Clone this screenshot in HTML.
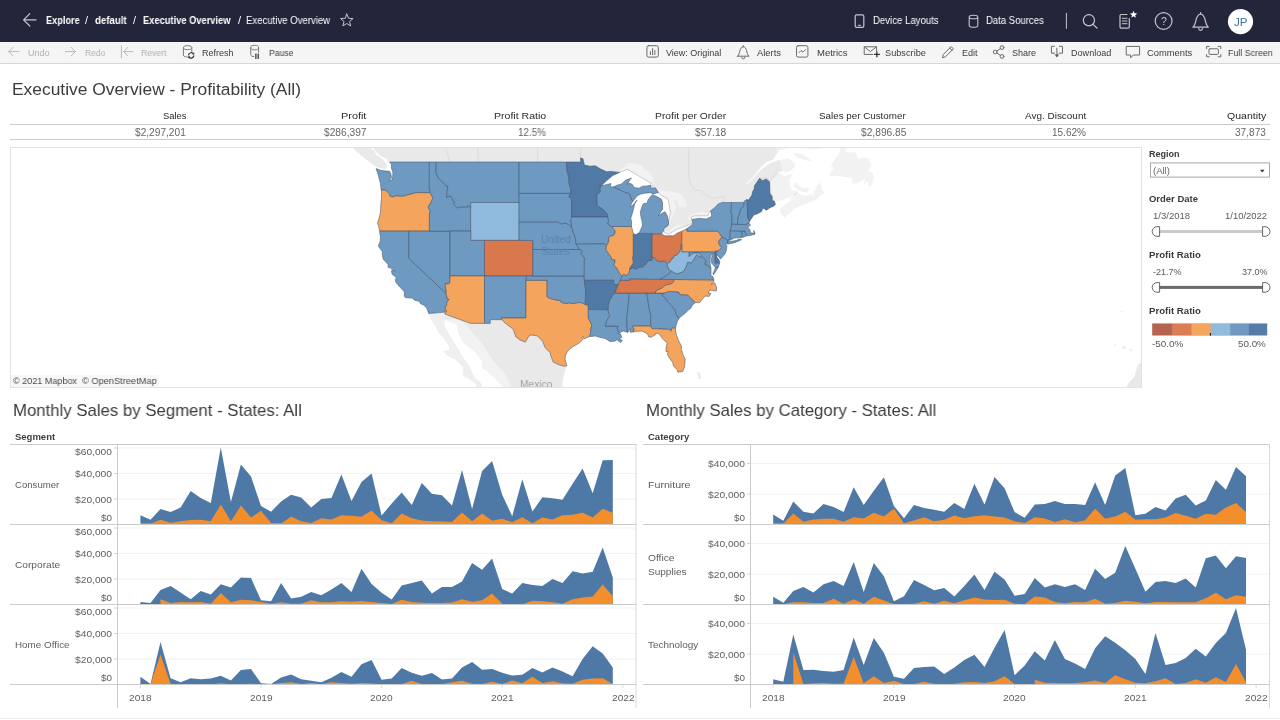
<!DOCTYPE html>
<html lang="en">
<head>
<meta charset="utf-8">
<title>Executive Overview - Profitability</title>
<style>
*{box-sizing:border-box;margin:0;padding:0}
html,body{width:1280px;height:720px;overflow:hidden;background:#fff;font-family:"Liberation Sans",sans-serif;color:#333}
.abs{position:absolute}
.x{position:absolute;white-space:nowrap;transform-origin:0 50%;will-change:transform}
#hdr{position:absolute;left:0;top:0;width:1280px;height:42px;background:#23263b}
#tb{position:absolute;left:0;top:42px;width:1280px;height:22px;background:#f5f5f5;border-bottom:1px solid #d6d6d6}
.hl{position:absolute;height:1px;background:#cbcbcb}
#map{position:absolute;left:10px;top:147px;width:1132px;height:241px;border:1px solid #e2e2e2;overflow:hidden;background:#fff}
.ml{position:absolute;white-space:nowrap;font-size:10px;line-height:12px;will-change:transform}
</style>
</head>
<body>
<div id="hdr"></div>
<div id="tb"></div>
<div class="hl" style="left:10px;top:124px;width:1260px"></div>
<div class="hl" style="left:10px;top:139px;width:1260px"></div>
<div id="map">
<svg class="abs" style="left:0;top:0" width="1130" height="239" viewBox="0 0 1130 239">
<g id="bg"><path fill="#f2f2f2" d="M608.7,24.4 616.5,21.3 640.8,35.7 642.9,40.2 643.3,39.7 642.6,35.1 641.9,30.6 639.8,25.4 632.9,21.3 630.8,17.1 626.0,16.6 617.3,14.5 615.6,18.2 610.8,20.3ZM643.3,39.7 646.0,42.2 647.1,44.2 649.5,46.7 657.1,51.1 659.5,64.2 657.6,73.8 660.6,71.4 662.3,66.6 665.4,58.4 662.6,52.1 665.4,52.1 668.2,58.4 673.7,59.4 675.8,56.5 673.7,51.6 669.5,45.7 664.0,44.7 660.6,43.7 653.6,42.7 646.7,41.7ZM652.9,82.7 653.2,84.5 657.8,86.1 665.7,81.3 674.4,78.0 681.8,75.0 677.8,75.2 673.7,78.0 671.6,77.5 666.1,77.1 661.2,80.8 657.1,83.6ZM680.8,71.4 679.9,69.5 683.4,67.8 696.5,67.8 698.9,63.3 698.6,62.3 695.8,65.2 691.7,64.2 684.8,65.2 678.5,67.8 675.8,70.9Z"/>
<path fill="#e9e9e9" d="M346.0,-13.1 352.9,-6.5 361.9,-1.0 364.6,3.3 366.7,5.5 370.9,8.7 375.7,10.8 376.4,14.0 569.6,14.0 569.6,9.9 571.9,10.6 573.4,16.9 579.0,18.2 583.1,17.8 584.8,18.0 589.3,20.8 595.6,23.7 600.1,23.4 608.7,24.4 610.8,20.3 615.6,18.2 617.3,14.5 626.0,16.6 630.8,17.1 632.9,21.3 639.8,25.4 641.9,30.6 642.6,35.1 643.3,39.7 646.7,41.7 653.6,42.7 660.6,43.7 664.0,44.7 669.5,45.7 673.7,51.6 675.8,56.5 673.7,59.4 668.2,58.4 665.4,52.1 662.6,52.1 665.4,58.4 662.3,66.6 660.6,71.4 657.6,73.8 657.1,77.5 652.9,80.4 652.9,82.7 657.1,83.6 661.2,80.8 666.1,77.1 671.6,77.5 673.7,78.0 677.8,75.2 681.8,75.0 680.8,71.4 675.8,70.9 678.5,67.8 684.8,65.2 691.7,64.2 695.8,65.2 698.6,62.3 703.4,59.9 706.9,56.2 710.7,54.5 710.7,54.5 733.1,54.4 733.8,52.6 736.1,51.6 740.8,46.7 741.8,42.7 743.2,40.7 748.8,30.0 751.1,32.8 755.3,31.0 758.7,33.9 758.9,45.2 761.2,48.6 761.2,52.6 763.9,53.9 770.8,52.1 779.5,48.6 782.9,46.7 778.4,51.3 782.6,50.6 789.8,50.9 781.5,51.3 772.9,58.0 768.8,61.8 770.1,65.9 773.9,70.0 776.0,67.1 780.2,63.9 782.9,60.9 788.1,58.4 795.4,55.5 799.5,54.1 805.7,51.3 807.8,48.6 813.0,45.7 814.0,44.7 811.3,42.7 810.2,38.2 809.5,34.3 805.7,38.2 802.3,44.7 803.0,48.2 799.5,45.9 794.0,47.7 787.4,46.0 786.4,43.4 781.2,42.4 779.1,38.2 779.5,33.9 777.4,33.6 778.8,31.6 781.5,25.4 778.1,26.5 773.6,28.0 766.3,24.4 772.6,22.8 776.0,24.4 780.2,22.3 783.6,19.2 783.6,15.5 778.1,10.8 767.7,11.9 760.8,14.5 753.9,18.7 746.6,24.9 741.4,31.6 735.6,36.2 735.2,35.6 740.8,30.6 745.2,24.9 749.7,19.2 755.3,14.0 761.5,11.9 768.4,2.2 778.1,0.1 788.5,0.1 802.3,1.2 812.7,0.1 819.6,-5.4 829.9,-13.1ZM375.0,20.3 373.3,21.3 365.3,18.7 359.8,15.0 352.9,9.7 343.9,2.2 339.7,-4.8 346.0,-6.5 356.3,-1.5 362.6,2.2 366.0,7.6 371.9,11.3 375.0,15.5 376.4,18.2ZM782.2,38.2 785.0,34.1 789.8,39.7 798.8,40.2 795.4,44.7 788.5,42.7 784.3,39.2ZM817.5,28.5 823.0,19.2 819.6,18.7 825.1,8.7 827.2,8.1 831.3,-4.3 834.8,-13.1 841.0,-13.1 835.5,-1.0 834.8,4.4 840.3,4.4 843.8,3.9 847.2,10.8 854.1,9.2 857.9,11.3 860.4,17.1 856.9,23.4 861.1,24.4 863.1,28.8 860.4,38.2 856.9,38.2 856.9,33.1 852.8,36.2 854.1,30.6 847.9,34.6 844.5,35.6 841.0,35.6 841.7,30.1 834.1,29.0 826.5,28.0ZM781.5,4.9 791.9,6.0 800.9,12.9 795.4,12.4 786.4,9.7ZM417.7,165.6 434.3,164.1 433.7,166.0 459.6,175.4 479.3,175.4 479.3,171.7 491.0,171.7 491.0,171.7 493.2,174.3 502.2,181.3 505.0,188.9 508.4,191.7 514.3,194.2 517.8,188.2 520.2,187.0 526.4,187.9 531.6,193.2 534.0,199.6 539.4,205.0 539.6,207.4 542.3,214.2 548.5,217.0 553.4,218.4 555.8,217.7 553.4,225.1 551.7,232.7 551.3,244.0 494.6,244.0 491.9,238.7 484.2,230.4 481.5,228.1 475.3,222.8 471.1,220.5 470.4,212.0 462.8,202.7 451.7,194.0 447.6,184.5 445.5,176.5 442.4,175.6 433.8,171.6 433.4,178.1 437.9,186.1 442.8,194.0 447.9,201.9 451.1,208.1 458.0,217.4 462.1,226.6 464.9,231.2 468.3,232.7 471.1,237.2 470.4,244.0 466.3,244.0 464.9,236.5 456.6,229.7 452.4,228.1 451.7,219.0 444.8,211.6 441.4,210.5 435.8,207.4 432.0,203.1 438.6,201.9 437.2,196.4 432.4,190.1 426.9,183.7 424.8,178.9 420.6,172.4ZM1114.8,240.2 1117.6,235.0 1123.8,228.1 1125.2,222.0 1127.2,216.7 1130.7,214.3 1137.6,209.7 1144.5,201.9 1144.5,240.2ZM640.5,247.7 646.7,241.0 655.0,239.8 664.0,239.1 670.9,240.2 677.8,244.0 640.5,249.2ZM686.5,223.6 688.9,225.1 690.3,231.2 687.5,230.4ZM1103.0,195.6 1104.8,196.0 1104.1,198.0ZM1110.7,199.2 1115.5,197.6 1113.4,201.5ZM1118.3,201.1 1121.0,201.1 1120.3,203.9ZM1108.6,163.0 1112.0,163.8 1110.7,164.6Z"/>
<path fill="#fff" fill-opacity="0.4" d="M760.1,-18.7 881.8,-18.7 881.8,73.8 765.0,73.8 765.0,58.4 758.0,34.6 771.2,22.3Z"/>
<path fill="#fff" fill-opacity="0.4" d="M433.8,171.6 445.5,176.5 451.7,194.0 462.8,202.7 471.1,220.5 484.2,230.4 491.9,238.7 501.5,240.2 494.6,226.6 482.2,212.8 472.5,197.2 462.8,186.1 455.9,178.1 446.2,170.8Z"/>
<path fill="#fff" fill-opacity="0.3" d="M417.7,165.6 434.3,164.1 433.8,171.6 433.4,178.1 437.9,186.1 442.8,194.0 447.9,201.9 451.1,208.1 458.0,217.4 462.1,226.6 464.9,231.2 468.3,232.7 471.1,237.2 470.4,244.0 466.3,244.0 464.9,236.5 456.6,229.7 452.4,228.1 451.7,219.0 444.8,211.6 441.4,210.5 435.8,207.4 432.0,203.1 438.6,201.9 437.2,196.4 432.4,190.1 426.9,183.7 424.8,178.9 420.6,172.4Z"/>
<path fill="none" stroke="#b5b5b5" stroke-width="0.7" d="M608.7,24.4 616.5,21.3 640.8,35.7 642.9,40.2 646.0,42.2 647.1,44.2 649.5,46.7 657.1,51.1 659.5,64.2 657.6,73.8 657.1,77.5 652.9,80.4 652.9,82.7 653.2,84.5 657.8,86.1 665.7,81.3 674.4,78.0 681.8,75.0 680.8,71.4 679.9,69.5 683.4,67.8 696.5,67.8 698.9,63.3"/>
<path fill="none" stroke="#d2d2d2" stroke-width="0.6" d="M677.7,-13.1 677.7,29.0 679.9,36.2 683.4,41.7 690.3,42.7 693.7,46.2 697.9,49.1 700.7,49.9 704.1,50.4 709.0,48.6 713.1,48.9 712.8,51.6 712.4,54.1"/>
<path fill="none" stroke="#d2d2d2" stroke-width="0.6" d="M397.8,-13.1 434.5,-1.0 438.8,14.0"/>
<path fill="none" stroke="#d2d2d2" stroke-width="0.6" d="M467.0,-13.1 467.0,14.0"/>
<path fill="none" stroke="#d2d2d2" stroke-width="0.6" d="M526.4,-13.1 526.7,14.0"/>
<path fill="none" stroke="#d2d2d2" stroke-width="0.6" d="M569.6,-13.1 569.6,9.9"/>
<path fill="none" stroke="#d2d2d2" stroke-width="0.6" d="M758.7,33.9 754.6,29.0 750.1,31.6"/>
<path fill="none" stroke="#d2d2d2" stroke-width="0.6" d="M758.7,33.9 765.0,25.4 766.3,24.4"/>
<path fill="none" stroke="#d2d2d2" stroke-width="0.6" d="M782.9,46.7 786.4,44.7"/></g>
<g id="st" stroke="#40506a" stroke-opacity="0.7" stroke-width="0.75" stroke-linejoin="round">
<path d="M404.9,44.7 402.7,45.4 398.5,46.4 394.4,47.7 389.5,48.5 385.4,47.7 381.9,49.1 378.7,48.2 378.5,46.0 375.7,43.2 373.6,42.1 370.2,41.9 369.7,38.2 369.5,35.6 368.4,31.6 367.1,26.5 365.1,20.5 369.5,22.3 375.0,23.1 378.5,23.2 379.7,25.4 380.5,29.5 378.1,33.1 380.9,32.1 381.7,28.5 381.9,24.4 380.5,20.3 380.5,16.6 378.6,14.0 418.4,14.0 418.3,40.4 419.1,43.0 419.1,44.7Z" fill="#6e9ac2"/>
<path d="M370.2,41.9 373.6,42.1 375.7,43.2 378.5,46.0 378.7,48.2 381.9,49.1 385.4,47.7 389.5,48.5 394.4,47.7 398.5,46.4 402.7,45.4 404.9,44.7 419.1,44.7 420.1,46.7 422.0,50.1 419.6,55.0 418.2,57.0 417.2,59.9 419.3,62.8 418.4,65.9 418.4,83.1 368.7,83.1 367.4,77.5 366.4,75.3 368.1,70.0 369.5,64.2 369.8,56.5 370.5,49.6 370.5,42.7Z" fill="#f4a45c"/>
<path d="M368.7,83.1 397.8,83.1 397.8,110.4 434.9,145.1 435.4,146.8 436.5,151.0 438.3,151.2 435.8,154.3 435.7,157.6 434.3,158.5 434.5,161.8 435.8,163.2 434.3,164.1 417.7,165.6 416.8,163.0 415.8,160.1 412.3,156.8 409.6,155.8 408.2,153.2 403.4,152.2 401.3,150.1 394.6,149.7 393.3,148.4 393.3,143.8 391.6,141.7 388.8,139.1 384.7,134.0 384.3,131.4 385.4,129.7 384.0,128.4 381.2,126.3 380.5,123.6 381.2,121.0 383.3,123.6 382.6,120.1 380.5,120.6 377.1,119.3 377.1,116.6 372.2,111.3 371.5,107.8 371.2,103.3 367.7,98.8 367.4,97.4 369.1,93.8 369.5,88.7 368.8,85.5Z" fill="#6e9ac2"/>
<path d="M397.8,83.1 439.0,83.1 439.0,134.9 437.2,136.2 434.1,135.7 434.5,138.3 434.8,140.8 435.4,143.8 434.9,145.1 397.8,110.4Z" fill="#6e9ac2"/>
<path d="M418.4,14.0 425.1,14.0 425.1,24.6 427.4,30.3 432.4,34.6 435.2,38.2 436.9,38.2 436.2,43.2 435.5,49.1 439.6,47.8 440.7,49.6 443.1,54.1 443.1,56.5 446.2,59.9 451.1,58.8 456.6,58.9 456.8,57.4 459.7,59.7 459.7,83.1 418.4,83.1 418.4,65.9 419.3,62.8 417.2,59.9 418.2,57.0 419.6,55.0 422.0,50.1 420.1,46.7 419.1,44.7 419.1,43.0 418.3,40.4Z" fill="#6e9ac2"/>
<path d="M425.1,14.0 425.1,24.6 427.4,30.3 432.4,34.6 435.2,38.2 436.9,38.2 436.2,43.2 435.5,49.1 439.6,47.8 440.7,49.6 443.1,54.1 443.1,56.5 446.2,59.9 451.1,58.8 456.6,58.9 456.8,57.4 459.7,59.7 459.7,54.5 508.1,54.5 508.1,14.0Z" fill="#6e9ac2"/>
<path d="M459.7,54.5 508.1,54.5 508.1,92.4 459.7,92.4Z" fill="#90badd"/>
<path d="M439.0,83.1 459.7,83.1 459.7,92.4 473.5,92.4 473.5,128.0 439.0,128.0Z" fill="#6e9ac2"/>
<path d="M473.5,92.4 521.9,92.4 521.9,128.0 473.5,128.0Z" fill="#d9784c"/>
<path d="M439.0,128.0 473.5,128.0 473.5,175.4 459.6,175.4 433.7,166.0 434.3,164.1 435.8,163.2 434.5,161.8 434.3,158.5 435.7,157.6 435.8,154.3 438.3,151.2 436.5,151.0 435.4,146.8 434.9,145.1 435.4,143.8 434.8,140.8 434.5,138.3 434.1,135.7 437.2,136.2 439.0,134.9Z" fill="#f4a45c"/>
<path d="M473.5,128.0 515.4,128.0 515.1,132.3 514.9,170.0 490.3,170.0 491.0,171.7 479.3,171.7 479.3,175.4 473.5,175.4Z" fill="#6e9ac2"/>
<path d="M490.3,170.0 514.9,170.0 515.1,132.3 536.1,132.3 536.1,148.8 538.9,150.3 541.6,151.0 545.8,152.2 549.2,152.4 550.3,154.5 555.5,155.6 558.2,154.7 561.7,155.6 567.2,154.5 570.7,154.7 574.3,156.5 577.3,157.2 577.3,161.6 577.3,170.0 579.0,173.2 580.9,177.3 579.7,181.3 579.5,185.3 578.7,188.5 572.7,190.9 572.4,188.5 570.7,189.3 571.7,191.7 568.6,194.8 561.7,198.8 556.8,202.7 554.4,207.4 554.1,211.2 555.8,217.7 553.4,218.4 548.5,217.0 542.3,214.2 539.6,207.4 539.4,205.0 534.0,199.6 531.6,193.2 526.4,187.9 520.2,187.0 517.8,188.2 514.3,194.2 508.4,191.7 505.0,188.9 502.2,181.3 493.2,174.3 491.0,171.7Z" fill="#f4a45c"/>
<path d="M515.4,128.0 573.3,128.0 573.3,132.3 574.6,141.7 574.3,156.5 570.7,154.7 567.2,154.5 561.7,155.6 558.2,154.7 555.5,155.6 550.3,154.5 549.2,152.4 545.8,152.2 541.6,151.0 538.9,150.3 536.1,148.8 536.1,132.3 515.1,132.3Z" fill="#6e9ac2"/>
<path d="M521.9,101.5 568.5,101.5 570.7,102.4 571.4,103.7 570.0,105.5 573.4,109.5 573.3,128.0 521.9,128.0Z" fill="#6e9ac2"/>
<path d="M508.1,73.8 546.5,73.8 549.9,75.9 554.8,75.1 558.9,77.5 560.6,78.6 561.7,83.1 563.1,85.9 564.4,90.5 564.8,95.1 565.3,96.2 568.5,101.5 521.9,101.5 521.9,92.4 508.1,92.4Z" fill="#6e9ac2"/>
<path d="M508.1,45.3 559.9,45.3 557.9,48.6 560.6,51.6 560.6,69.0 560.0,72.8 560.6,78.6 558.9,77.5 554.8,75.1 549.9,75.9 546.5,73.8 508.1,73.8Z" fill="#6e9ac2"/>
<path d="M508.1,14.0 555.3,14.0 556.2,23.4 557.9,29.5 558.2,35.6 559.9,41.7 559.9,45.3 508.1,45.3Z" fill="#6e9ac2"/>
<path d="M559.9,45.3 559.9,41.7 558.2,35.6 557.9,29.5 556.2,23.4 555.3,14.0 569.6,14.0 569.6,9.9 571.9,10.6 573.4,16.9 579.0,18.2 583.1,17.8 584.8,18.0 589.3,20.8 595.6,23.7 600.1,23.4 608.7,24.4 601.8,27.5 596.3,32.1 591.4,36.7 591.3,37.7 589.4,38.1 589.4,43.9 585.9,46.7 586.2,51.6 586.2,57.0 589.3,59.4 592.1,61.3 596.3,65.7 596.8,69.0 560.6,69.0 560.6,51.6 557.9,48.6Z" fill="#5079a5"/>
<path d="M560.6,69.0 596.8,69.0 597.6,72.8 596.9,76.1 600.7,78.5 603.9,82.2 604.2,85.0 602.8,87.3 598.0,88.7 597.6,94.2 595.4,98.0 593.3,95.9 565.3,96.2 564.8,95.1 564.4,90.5 563.1,85.9 561.7,83.1 560.6,78.6 560.0,72.8Z" fill="#6e9ac2"/>
<path d="M565.3,96.2 593.3,95.9 595.4,98.0 594.9,101.5 597.6,105.5 600.4,109.5 600.7,111.3 603.9,111.8 604.0,114.0 602.8,117.5 605.9,120.1 608.7,125.4 611.1,128.2 609.4,132.3 608.4,134.4 607.3,136.6 602.7,136.6 602.7,132.3 573.3,132.3 573.4,109.5 570.0,105.5 571.4,103.7 570.7,102.4 568.5,101.5Z" fill="#6e9ac2"/>
<path d="M573.3,132.3 602.7,132.3 602.7,136.6 607.3,136.6 605.6,140.8 604.5,144.2 603.2,145.1 601.1,148.4 598.7,152.6 597.6,156.8 597.2,161.8 577.3,161.6 577.3,157.2 574.3,156.5 574.6,141.7Z" fill="#5079a5"/>
<path d="M577.3,161.6 597.2,161.8 597.6,165.9 599.0,167.5 595.9,172.4 594.2,178.1 607.1,178.1 606.3,180.5 607.7,183.7 608.7,184.7 606.6,185.7 609.4,185.7 610.8,189.3 608.0,190.1 611.5,192.8 609.4,194.6 605.9,191.7 603.9,193.2 599.0,193.6 596.3,191.7 592.8,190.1 590.0,189.7 584.5,188.1 578.7,188.5 579.5,185.3 579.7,181.3 580.9,177.3 579.0,173.2 577.3,170.0Z" fill="#6e9ac2"/>
<path d="M597.2,161.8 597.6,156.8 598.7,152.6 601.1,148.4 603.2,145.1 617.7,145.1 618.4,145.9 615.8,170.8 616.3,184.3 612.2,183.1 608.7,184.7 607.7,183.7 606.3,180.5 607.1,178.1 594.2,178.1 595.9,172.4 599.0,167.5 597.6,165.9Z" fill="#6e9ac2"/>
<path d="M617.7,145.1 635.7,145.1 638.6,162.8 639.8,167.5 639.5,173.6 639.8,178.1 621.8,178.1 621.8,179.3 623.2,180.9 622.4,183.9 620.5,184.3 619.1,184.1 619.6,180.9 618.7,180.9 618.0,183.3 616.3,184.3 615.8,170.8 618.4,145.9Z" fill="#6e9ac2"/>
<path d="M635.7,145.1 638.6,162.8 639.8,167.5 639.5,173.6 639.8,178.1 640.8,180.5 659.2,181.5 660.2,183.2 660.6,180.1 664.4,180.3 665.4,176.5 666.4,173.2 668.5,169.7 666.8,169.1 664.7,165.1 664.0,161.8 660.6,157.6 656.7,153.9 654.3,149.7 651.2,147.6 652.9,145.1Z" fill="#6e9ac2"/>
<path d="M622.4,183.9 623.2,180.9 621.8,179.3 621.8,178.1 639.8,178.1 640.8,180.5 659.2,181.5 660.2,183.2 660.6,180.1 664.4,180.3 664.7,183.7 665.7,187.7 668.2,194.0 670.6,198.0 670.2,201.1 672.3,207.4 674.2,211.2 673.7,217.4 673.0,220.5 671.6,223.6 668.2,223.9 666.8,224.2 666.4,222.0 662.6,218.2 661.6,214.3 659.2,211.2 656.4,206.6 657.1,203.5 655.0,203.5 655.0,200.3 656.1,194.8 653.6,192.8 650.9,190.1 648.8,186.5 646.7,185.3 644.3,185.7 644.3,186.9 639.8,189.3 637.4,188.6 637.0,186.9 635.0,184.9 630.8,183.1 626.0,183.3Z" fill="#f4a45c"/>
<path d="M652.9,145.1 657.8,143.4 667.2,143.8 667.2,144.7 667.9,144.2 669.0,146.6 676.7,146.8 684.4,154.6 681.3,157.2 679.9,160.1 677.1,162.2 674.4,165.1 671.3,167.5 668.5,169.7 666.8,169.1 664.7,165.1 664.0,161.8 660.6,157.6 656.7,153.9 654.3,149.7 651.2,147.6Z" fill="#6e9ac2"/>
<path d="M644.5,145.1 652.9,145.1 657.8,143.4 667.2,143.8 667.2,144.7 667.9,144.2 669.0,146.6 676.7,146.8 684.4,154.6 688.6,154.7 691.0,151.4 694.4,148.0 698.2,148.4 700.0,145.5 697.2,145.1 698.6,142.1 705.3,143.1 705.7,140.0 703.8,134.9 700.0,136.6 702.7,134.0 702.9,131.9 662.8,131.5 662.6,133.6 660.6,135.6 656.4,136.6 654.3,137.0 651.9,139.1 650.2,140.3 646.7,141.7 644.6,143.4Z" fill="#f4a45c"/>
<path d="M603.2,145.1 604.5,144.2 605.6,140.8 607.3,136.6 608.4,134.4 609.4,132.3 618.7,132.3 618.7,130.7 648.9,131.4 662.8,131.5 662.6,133.6 660.6,135.6 656.4,136.6 654.3,137.0 651.9,139.1 650.2,140.3 646.7,141.7 644.6,143.4 644.5,145.1Z" fill="#d9784c"/>
<path d="M609.4,132.3 611.1,128.2 612.5,126.3 616.0,127.4 618.4,123.6 618.7,121.0 621.8,119.7 625.3,121.0 627.4,119.4 629.4,118.8 631.2,119.3 634.3,116.8 637.0,112.8 640.8,112.2 641.1,109.5 643.3,109.5 645.3,112.2 649.1,113.7 653.6,112.8 656.4,115.6 656.4,117.8 658.5,122.1 660.8,123.3 655.7,127.6 648.9,131.4 618.7,130.7 618.7,132.3Z" fill="#6e9ac2"/>
<path d="M595.4,98.0 597.6,94.2 598.0,88.7 602.8,87.3 604.2,85.0 603.9,82.2 600.7,78.5 620.5,78.5 621.5,82.2 622.4,85.9 622.3,107.3 621.8,110.4 622.5,114.9 619.4,119.3 618.7,121.0 618.4,123.6 616.0,127.4 612.5,126.3 611.1,128.2 608.7,125.4 605.9,120.1 602.8,117.5 604.0,114.0 603.9,111.8 600.7,111.3 600.4,109.5 597.6,105.5 594.9,101.5Z" fill="#f4a45c"/>
<path d="M622.4,85.9 622.3,107.3 621.8,110.4 622.5,114.9 619.4,119.3 618.7,121.0 621.8,119.7 625.3,121.0 627.4,119.4 629.4,118.8 631.2,119.3 634.3,116.8 637.0,112.8 640.8,112.2 641.1,109.5 641.2,85.9 641.2,85.4 627.2,85.4 624.6,86.4Z" fill="#5079a5"/>
<path d="M641.2,85.9 650.5,85.7 653.6,87.8 655.7,87.8 660.6,87.8 662.6,87.8 666.1,85.2 670.8,83.3 670.8,95.7 669.9,96.5 670.2,99.7 668.5,104.2 666.1,106.9 663.0,108.0 662.3,110.4 660.6,110.9 659.2,114.0 656.4,115.6 653.6,112.8 649.1,113.7 645.3,112.2 643.3,109.5 641.1,109.5Z" fill="#d9784c"/>
<path d="M627.2,85.4 641.2,85.4 641.2,85.9 650.5,85.7 652.3,83.1 652.9,80.4 657.1,77.5 657.6,73.8 656.4,68.1 654.0,63.8 651.2,65.2 647.4,67.6 649.8,63.8 651.6,61.3 651.6,54.5 650.2,51.1 645.3,48.3 641.5,46.9 639.8,48.2 637.0,52.1 635.7,55.5 632.6,55.5 631.2,58.0 629.4,63.8 629.8,68.1 631.2,73.8 631.5,77.5 628.7,84.1ZM602.3,39.0 611.5,43.4 614.9,44.7 618.4,45.7 620.1,50.6 621.8,53.6 625.3,49.1 626.3,47.7 629.1,46.2 633.6,45.2 639.8,44.7 641.9,46.2 645.3,44.9 647.4,44.7 646.0,42.2 644.3,39.7 642.6,40.2 639.8,39.7 639.8,37.0 636.4,37.9 631.5,38.2 628.1,40.2 623.2,39.5 621.1,36.2 617.7,35.1 616.0,36.7 619.1,31.6 620.5,30.1 614.9,32.1 610.1,36.2 605.9,37.2Z" fill="#6e9ac2"/>
<path d="M591.3,37.7 589.4,38.1 589.4,43.9 585.9,46.7 586.2,51.6 586.2,57.0 589.3,59.4 592.1,61.3 596.3,65.7 596.8,69.0 597.6,72.8 596.9,76.1 600.7,78.5 620.5,78.5 620.5,73.8 619.8,70.0 621.1,66.2 622.5,61.3 623.6,56.0 626.0,52.1 623.2,55.5 620.8,58.0 619.1,58.9 620.8,55.0 621.8,53.6 620.1,50.6 618.4,45.7 614.9,44.7 611.5,43.4 602.3,39.0 599.0,38.7 600.1,35.6 596.9,36.2Z" fill="#6e9ac2"/>
<path d="M670.8,83.3 676.0,80.6 676.0,83.1 706.5,83.1 708.6,85.5 711.0,89.1 708.1,92.6 707.6,95.6 710.7,99.7 707.9,102.6 706.0,103.3 704.8,102.9 703.5,104.0 670.8,104.0Z" fill="#f4a45c"/>
<path d="M676.0,83.1 676.0,80.6 681.3,76.6 682.0,74.7 680.9,71.4 688.2,70.3 695.1,71.1 699.3,69.0 700.7,68.5 700.3,64.7 698.9,63.3 703.4,59.9 706.9,56.2 710.7,54.5 720.4,54.5 720.4,58.4 720.0,64.2 721.0,68.1 720.9,76.1 719.3,82.7 719.0,89.6 719.5,90.5 717.7,91.5 718.3,92.4 716.6,94.2 715.9,95.1 716.6,92.4 711.0,89.1 708.6,85.5 706.5,83.1ZM715.6,96.0 717.6,96.0 723.5,94.7 730.7,91.7 728.0,91.0 725.2,92.6 721.4,93.1 717.6,93.8Z" fill="#6e9ac2"/>
<path d="M711.0,89.1 716.6,92.4 715.9,95.1 714.1,96.9 715.9,97.4 715.5,101.5 714.5,105.1 712.8,107.3 709.6,111.1 707.9,108.7 705.1,106.4 705.1,104.6 706.0,103.3 707.9,102.6 710.7,99.7 707.6,95.6 708.1,92.6Z" fill="#6e9ac2"/>
<path d="M703.5,104.0 704.8,102.9 706.0,103.3 705.1,104.6 705.1,106.4 706.2,109.5 708.3,112.2 708.6,115.3 704.1,115.2Z" fill="#5079a5"/>
<path d="M678.0,104.0 703.5,104.0 704.1,115.2 708.6,115.3 707.3,119.0 704.5,119.7 702.7,117.5 700.7,115.3 700.3,110.9 701.3,107.3 701.3,105.5 699.4,108.2 699.1,111.3 699.1,115.7 699.6,118.8 700.0,120.1 695.8,117.1 693.4,116.2 694.8,113.5 694.8,112.2 691.7,109.5 690.1,107.6 688.2,105.1 685.4,104.9 683.0,105.1 680.9,106.1 678.0,108.7Z" fill="#6e9ac2"/>
<path d="M648.9,131.4 655.7,127.6 660.8,123.3 665.9,125.9 672.3,123.6 674.7,119.3 676.8,114.0 679.9,115.0 682.2,112.2 685.8,106.4 689.4,109.3 690.1,107.6 691.7,109.5 694.8,112.2 694.8,113.5 693.4,116.2 695.8,117.1 700.0,120.1 700.0,123.2 700.0,128.0 702.0,128.6 702.9,131.9 662.8,131.5ZM704.5,119.7 707.3,119.0 704.8,123.2 702.4,126.9 702.0,125.4Z" fill="#6e9ac2"/>
<path d="M656.4,115.6 659.2,114.0 660.6,110.9 662.3,110.4 663.0,108.0 666.1,106.9 668.5,104.2 670.2,99.7 669.9,96.5 670.8,95.7 670.8,104.0 678.0,104.0 678.0,108.7 680.9,106.1 683.0,105.1 685.4,104.9 688.2,105.1 690.1,107.6 689.4,109.3 685.8,106.4 682.2,112.2 679.9,115.0 676.8,114.0 674.7,119.3 672.3,123.6 665.9,125.9 660.8,123.3 658.5,122.1 656.4,117.8Z" fill="#90badd"/>
<path d="M719.3,82.7 731.1,83.0 731.1,88.5 730.7,89.4 723.5,90.1 718.3,92.4 717.7,91.5 719.5,90.5 719.0,89.6Z" fill="#6e9ac2"/>
<path d="M731.1,83.0 734.0,83.0 734.0,84.1 735.2,86.1 735.8,87.8 733.1,89.0 730.7,89.4 731.1,88.5Z" fill="#6e9ac2"/>
<path d="M720.9,76.1 726.5,76.3 734.5,76.6 735.2,76.1 737.9,75.0 739.4,77.1 736.6,79.9 738.7,81.3 739.7,85.0 743.5,85.0 742.8,82.7 742.1,82.5 743.9,84.1 743.9,86.2 739.0,87.6 735.8,87.8 735.2,86.1 734.0,84.1 734.0,83.0 731.1,83.0 719.3,82.7Z" fill="#6e9ac2"/>
<path d="M720.4,54.5 733.1,54.4 732.8,58.4 729.3,61.3 729.3,63.3 728.3,66.6 726.9,70.0 726.6,73.8 726.5,76.3 720.9,76.1 721.0,68.1 720.0,64.2 720.4,58.4Z" fill="#6e9ac2"/>
<path d="M733.1,54.4 733.8,52.6 736.1,51.6 736.7,70.0 737.9,72.5 738.7,73.1 737.9,75.0 735.2,76.1 734.5,76.6 726.5,76.3 726.6,73.8 726.9,70.0 728.3,66.6 729.3,63.3 729.3,61.3 732.8,58.4Z" fill="#6e9ac2"/>
<path d="M736.1,51.6 737.6,52.1 738.7,50.1 740.8,47.2 741.8,43.2 743.2,40.7 743.5,37.7 748.8,30.0 750.1,31.6 751.1,32.8 755.3,31.0 758.7,33.9 758.9,45.2 761.2,48.6 761.2,52.6 763.2,53.1 764.5,56.5 762.2,58.4 759.4,59.4 757.3,60.9 755.3,62.3 753.5,60.9 751.8,59.9 750.8,63.3 748.4,64.7 745.6,66.2 743.5,66.6 742.1,68.1 740.8,70.0 739.4,71.9 738.7,73.1 737.9,72.5 736.7,70.0Z" fill="#5079a5"/>
</g>
</svg>
<div class="ml" style="left:508.5px;top:229.7px;font-size:10.9px;line-height:13px;color:#a3a3a3;transform-origin:0 50%;transform:scaleX(.94)">Mexico</div>
<div class="abs" style="left:0;top:227px;width:148px;height:12px;background:rgba(246,246,246,.85)"></div>
</div>
<svg class="abs" style="left:0;top:0" width="1280" height="400" viewBox="0 0 1280 400">
<g fill="none" stroke="#c4c5cf" stroke-width="1.2" stroke-linecap="round" stroke-linejoin="round">
<path d="M36,19.8 H23.6 M29.8,13.6 L23.6,19.8 L29.8,26"/>
<path d="M346.80,14.00 L348.50,18.25 L353.08,18.56 L349.56,21.50 L350.68,25.94 L346.80,23.50 L342.92,25.94 L344.04,21.50 L340.52,18.56 L345.10,18.25Z" stroke-width="1"/>
<rect x="855.2" y="14.8" width="8.6" height="12.6" rx="1.4"/><path d="M858.3,25.3 H860.7" stroke-width="1"/>
<path d="M969.2,17.0 A4.3,1.8 0 1 0 977.8,17.0 A4.3,1.8 0 1 0 969.2,17.0 V25.4 A4.3,1.8 0 0 0 977.8,25.4 V17.0" stroke-width="1.1"/>
<path d="M1066.4,13.4 V28.4" stroke-width="1"/>
<circle cx="1088.9" cy="20.3" r="5.6"/><path d="M1093,24.4 L1097,28"/>
<path d="M1129.3,18.5 V26.8 a1.4,1.4 0 0 1 -1.4,1.4 H1121.4 a1.4,1.4 0 0 1 -1.4,-1.4 V15.9 a1.4,1.4 0 0 1 1.4,-1.4 H1127" /><path d="M1122.3,18.3 H1127 M1122.3,21 H1127 M1122.3,23.7 H1127" stroke-width="1"/>
<circle cx="1163.6" cy="21" r="8.4"/>
<path d="M1192.8,27.2 C1197.1,24.0 1194.8,14.5 1200.6,14.0 C1206.4,14.5 1204.1,24.0 1208.4,27.2 L1192.8,27.2 Z"/><path d="M1198.8,28.6 a1.8,1.8 0 0 0 3.6,0"/><path d="M1200.6,12.6 V13.8"/>
</g>
<path d="M1133.60,10.70 L1134.60,13.22 L1137.31,13.39 L1135.22,15.13 L1135.89,17.76 L1133.60,16.30 L1131.31,17.76 L1131.98,15.13 L1129.89,13.39 L1132.60,13.22Z" fill="#fff"/>
<circle cx="1240.5" cy="21.6" r="12.6" fill="#fff"/>
<g fill="none" stroke-width="1" stroke-linecap="round" stroke-linejoin="round">
<g stroke="#b9b9b9">
<path d="M18.8,51.6 H8.8 M12.8,47.4 L8.8,51.6 L12.8,55.8"/>
<path d="M65.3,51.6 H75.3 M71.3,47.4 L75.3,51.6 L71.3,55.8"/>
<path d="M121.4,45.6 V57.8 M132.8,51.6 H123.8 M127.6,47.4 L123.8,51.6 L127.6,55.8"/>
</g><g stroke="#6a6a6a">
<path d="M183.4,47.6 A4.2,2.0 0 1 0 191.8,47.6 A4.2,2.0 0 1 0 183.4,47.6 V55.0 A4.2,2.0 0 0 0 191.8,55.0 V47.6" stroke="#7a7a7a"/>
<circle cx="191.2" cy="55.4" r="3.7" fill="#f5f5f5" stroke="none"/><g stroke="#333" stroke-width="1.25"><path d="M188.6,54.9 a2.7,2.7 0 0 1 4.9,-1 M193.8,55.9 a2.7,2.7 0 0 1 -4.9,1"/></g><path d="M194.2,52.3 V54.3 H192.2 Z M188.2,58.5 V56.5 H190.2 Z" fill="#333" stroke="none"/>
<path d="M250.7,47.6 A4.0,2.0 0 1 0 258.6,47.6 A4.0,2.0 0 1 0 250.7,47.6 V55.0 A4.0,2.0 0 0 0 258.6,55.0 V47.6" stroke="#7a7a7a"/>
<rect x="254.2" y="52.6" width="6" height="7" fill="#f5f5f5" stroke="none"/><path d="M255.85,53.6 V58.9 M258.25,53.6 V58.9" stroke="#555" stroke-width="1.5" stroke-linecap="butt"/>
<rect x="646.9" y="45.7" width="11.4" height="11.4" rx="1.6"/><path d="M650.4,54.6 V51.6 M652.6,54.6 V48.6 M654.8,54.6 V50.4"/>
<path d="M737.5,56.2 C740.7,54.0 738.9,47.2 743.3,46.8 C747.6,47.2 745.9,54.0 749.1,56.2 L737.5,56.2 Z"/><path d="M741.8,57.4 a1.5,1.5 0 0 0 3,0"/><path d="M743.3,45.6 V46.6"/>
<rect x="796.5" y="45.7" width="11.4" height="11.4" rx="1.6"/><path d="M799,52.6 L801,50.6 L803,52.2 L805.6,49.6"/>
<path d="M876.6,51.4 V46.8 H864.2 V54.4 H872.6 M864.2,46.8 L870.4,51.6 L876.6,46.8"/><path d="M876.9,52 V56.8 M874.4,54.4 H879.4" stroke="#333" stroke-width="1.3"/>
<path d="M942.6,57.4 L943.4,54.4 L951.2,46.6 L953.4,48.8 L945.6,56.6 Z M949.8,48 L952,50.2"/>
<circle cx="1002" cy="47.6" r="1.9"/><circle cx="995.2" cy="52" r="1.9"/><circle cx="1002" cy="56.4" r="1.9"/><path d="M996.9,51 L1000.3,48.7 M996.9,53 L1000.3,55.3"/>
<path d="M1054.4,46.3 H1051.4 V53.2 H1054.6 M1059.4,46.3 H1062.5 V53.2 H1059.2 M1056.9,48.2 V55.5"/><path d="M1054.7,54.6 H1059.1 L1056.9,57.4 Z" fill="#555" stroke="none"/>
<path d="M1126.6,46.4 H1139.6 V55 H1133.4 L1130.6,57.8 V55 H1126.6 Z"/>
<path d="M1206.6,48.6 V46.4 H1209.2 M1218.2,46.4 H1220.8 V48.6 M1220.8,54.6 V56.8 H1218.2 M1209.2,56.8 H1206.6 V54.6"/><rect x="1209" y="48.8" width="9.4" height="5.6" rx="0.8"/>
</g></g>
<rect x="1150.5" y="162.9" width="119" height="14.2" fill="#fff" stroke="#a8a8a8" stroke-width="1"/>
<path d="M1260.1,169.8 H1264.5 L1262.3,172.6 Z" fill="#333"/>
<rect x="1159" y="230.0" width="104" height="3" fill="#cacaca"/>
<path d="M1159.6,226.7 V236.3 H1157 a4.6,4.6 0 0 1 0,-9.6 Z" fill="#fff" stroke="#555" stroke-width="0.9"/>
<path d="M1262.6,226.7 V236.3 H1265.2 a4.6,4.6 0 0 0 0,-9.6 Z" fill="#fff" stroke="#555" stroke-width="0.9"/>
<rect x="1159" y="285.9" width="104" height="3" fill="#6a6a6a"/>
<path d="M1159.6,282.6 V292.2 H1157 a4.6,4.6 0 0 1 0,-9.6 Z" fill="#fff" stroke="#555" stroke-width="0.9"/>
<path d="M1262.6,282.6 V292.2 H1265.2 a4.6,4.6 0 0 0 0,-9.6 Z" fill="#fff" stroke="#555" stroke-width="0.9"/>
<rect x="1152.2" y="323.4" width="20.6" height="12.1" fill="#b5634f"/>
<rect x="1172.5" y="323.4" width="19.4" height="12.1" fill="#dd7c50"/>
<rect x="1191.6" y="323.4" width="19.4" height="12.1" fill="#f4a55e"/>
<rect x="1210.7" y="323.4" width="19.7" height="12.1" fill="#91bbdd"/>
<rect x="1230.1" y="323.4" width="19.1" height="12.1" fill="#7099c2"/>
<rect x="1248.9" y="323.4" width="18.3" height="12.1" fill="#557ba6"/>
<path d="M1152.2,323.4 H1266.9 M1152.2,335.5 H1266.9" stroke="#c9b8a5" stroke-width="0.6"/>
<rect x="1209.9" y="333" width="1" height="2.6" fill="#111"/>
</svg>
<div class="hl" style="left:0;top:718px;width:1280px;background:#ececec"></div>
<svg class="abs" style="left:0;top:0" width="1280" height="720" viewBox="0 0 1280 720"><line x1="118" x2="636" y1="499.0" y2="499.0" stroke="#f2f2f2" stroke-width="1"/>
<line x1="114" x2="117" y1="499.0" y2="499.0" stroke="#d0d0d0" stroke-width="1"/>
<line x1="118" x2="636" y1="473.5" y2="473.5" stroke="#f2f2f2" stroke-width="1"/>
<line x1="114" x2="117" y1="473.5" y2="473.5" stroke="#d0d0d0" stroke-width="1"/>
<line x1="118" x2="636" y1="448.0" y2="448.0" stroke="#f2f2f2" stroke-width="1"/>
<line x1="114" x2="117" y1="448.0" y2="448.0" stroke="#d0d0d0" stroke-width="1"/>
<path d="M140.4,523.7 L140.4,515.2 L150.5,519.8 L160.5,509.1 L170.6,512.1 L180.6,507.6 L190.7,491.0 L200.7,497.9 L210.8,503.0 L220.8,447.5 L230.9,502.0 L240.9,464.4 L251.0,476.6 L261.0,506.0 L271.1,511.7 L281.1,501.5 L291.1,494.8 L301.2,497.5 L311.2,507.4 L321.3,498.9 L331.4,497.9 L341.4,474.5 L351.5,500.9 L361.5,482.0 L371.6,473.5 L381.6,515.6 L391.7,503.6 L401.7,492.4 L411.8,505.0 L421.8,483.1 L431.9,493.8 L441.9,495.3 L452.0,505.4 L462.0,469.9 L472.1,509.1 L482.1,470.9 L492.1,460.9 L502.2,494.8 L512.2,516.2 L522.3,479.2 L532.4,511.5 L542.4,497.3 L552.5,498.3 L562.5,499.7 L572.6,483.7 L582.6,468.4 L592.7,493.2 L602.7,460.3 L612.8,459.9 L612.8,523.7 Z" fill="#4e79a7"/>
<path d="M150.5,523.7 L150.5,523.7 L160.5,519.8 L170.6,522.7 L180.6,521.3 L190.7,520.0 L200.7,519.8 L210.8,521.3 L220.8,504.4 L230.9,521.3 L240.9,505.4 L251.0,517.6 L261.0,510.7 L271.1,522.9 L281.1,523.7 L291.1,516.4 L301.2,521.3 L311.2,522.9 L321.3,518.2 L331.4,519.6 L341.4,515.2 L351.5,515.8 L361.5,516.8 L371.6,510.5 L381.6,520.2 L391.7,523.3 L401.7,513.5 L411.8,518.2 L421.8,520.6 L431.9,521.3 L441.9,521.5 L452.0,521.9 L462.0,512.5 L472.1,521.3 L482.1,513.5 L492.1,520.8 L502.2,518.8 L512.2,522.3 L522.3,517.2 L532.4,523.3 L542.4,517.6 L552.5,519.6 L562.5,515.2 L572.6,514.8 L582.6,512.7 L592.7,517.6 L602.7,508.7 L612.8,512.7 L612.8,523.7 Z" fill="#f28e2b"/>
<line x1="118" x2="636" y1="579.0" y2="579.0" stroke="#f2f2f2" stroke-width="1"/>
<line x1="114" x2="117" y1="579.0" y2="579.0" stroke="#d0d0d0" stroke-width="1"/>
<line x1="118" x2="636" y1="553.5" y2="553.5" stroke="#f2f2f2" stroke-width="1"/>
<line x1="114" x2="117" y1="553.5" y2="553.5" stroke="#d0d0d0" stroke-width="1"/>
<line x1="118" x2="636" y1="528.0" y2="528.0" stroke="#f2f2f2" stroke-width="1"/>
<line x1="114" x2="117" y1="528.0" y2="528.0" stroke="#d0d0d0" stroke-width="1"/>
<path d="M140.4,604.3 L140.4,601.9 L150.5,602.9 L160.5,590.1 L170.6,586.0 L180.6,592.5 L190.7,599.2 L200.7,591.1 L210.8,594.5 L220.8,584.2 L230.9,587.6 L240.9,577.5 L251.0,578.1 L261.0,600.2 L271.1,601.3 L281.1,583.0 L291.1,598.6 L301.2,596.8 L311.2,591.9 L321.3,595.2 L331.4,589.5 L341.4,583.0 L351.5,592.1 L361.5,568.8 L371.6,584.0 L381.6,592.7 L391.7,599.6 L401.7,585.6 L411.8,583.0 L421.8,580.5 L431.9,593.5 L441.9,587.0 L452.0,587.0 L462.0,581.5 L472.1,563.1 L482.1,569.8 L492.1,558.6 L502.2,589.1 L512.2,593.5 L522.3,583.0 L532.4,585.0 L542.4,586.0 L552.5,578.9 L562.5,583.0 L572.6,571.2 L582.6,573.4 L592.7,571.8 L602.7,547.4 L612.8,577.5 L612.8,604.3 Z" fill="#4e79a7"/>
<path d="M160.5,604.3 L160.5,599.2 L170.6,602.9 L180.6,601.9 L190.7,602.3 L200.7,601.9 L210.8,603.7 L220.8,593.1 L230.9,602.3 L240.9,599.8 L251.0,600.2 L261.0,601.9 L271.1,603.7 L281.1,602.3 L291.1,603.7 L301.2,603.7 L311.2,600.2 L321.3,602.3 L331.4,602.3 L341.4,601.3 L351.5,601.7 L361.5,601.0 L371.6,601.9 L381.6,602.9 L391.7,603.9 L401.7,599.8 L411.8,601.9 L421.8,602.7 L431.9,602.9 L441.9,602.9 L452.0,602.5 L462.0,599.2 L472.1,601.7 L482.1,600.2 L492.1,593.5 L502.2,603.7 L502.2,604.3 ZM522.3,604.3 L522.3,604.3 L532.4,600.8 L542.4,601.3 L552.5,602.3 L562.5,603.7 L572.6,599.2 L582.6,597.6 L592.7,596.6 L602.7,584.4 L612.8,596.2 L612.8,604.3 Z" fill="#f28e2b"/>
<line x1="118" x2="636" y1="659.0" y2="659.0" stroke="#f2f2f2" stroke-width="1"/>
<line x1="114" x2="117" y1="659.0" y2="659.0" stroke="#d0d0d0" stroke-width="1"/>
<line x1="118" x2="636" y1="633.5" y2="633.5" stroke="#f2f2f2" stroke-width="1"/>
<line x1="114" x2="117" y1="633.5" y2="633.5" stroke="#d0d0d0" stroke-width="1"/>
<line x1="118" x2="636" y1="608.0" y2="608.0" stroke="#f2f2f2" stroke-width="1"/>
<line x1="114" x2="117" y1="608.0" y2="608.0" stroke="#d0d0d0" stroke-width="1"/>
<path d="M140.4,684.3 L140.4,676.8 L150.5,683.9 L160.5,642.0 L170.6,678.2 L180.6,682.3 L190.7,678.2 L200.7,679.2 L210.8,678.6 L220.8,675.8 L230.9,680.6 L240.9,670.1 L251.0,669.1 L261.0,683.3 L271.1,683.9 L281.1,677.6 L291.1,674.5 L301.2,679.2 L311.2,680.8 L321.3,682.3 L331.4,677.8 L341.4,672.1 L351.5,676.8 L361.5,664.2 L371.6,659.9 L381.6,679.8 L391.7,678.6 L401.7,668.0 L411.8,672.7 L421.8,675.8 L431.9,673.1 L441.9,679.6 L452.0,678.6 L462.0,667.4 L472.1,662.0 L482.1,669.7 L492.1,669.1 L502.2,672.7 L512.2,675.6 L522.3,674.8 L532.4,668.0 L542.4,672.5 L552.5,667.4 L562.5,671.5 L572.6,676.2 L582.6,658.9 L592.7,646.3 L602.7,653.4 L612.8,667.4 L612.8,684.3 Z" fill="#4e79a7"/>
<path d="M150.5,684.3 L150.5,684.3 L160.5,654.4 L170.6,684.1 L170.6,684.3 ZM210.8,684.3 L210.8,684.3 L220.8,683.3 L230.9,684.3 L240.9,683.9 L251.0,683.7 L261.0,684.3 L271.1,684.3 L281.1,682.9 L291.1,682.3 L301.2,683.9 L311.2,682.9 L321.3,683.9 L331.4,682.3 L341.4,682.9 L351.5,683.7 L361.5,682.9 L371.6,683.5 L381.6,684.3 L391.7,684.3 L401.7,683.9 L411.8,680.8 L421.8,683.9 L431.9,684.3 L441.9,684.3 L452.0,682.3 L462.0,680.8 L472.1,683.7 L482.1,683.9 L492.1,681.7 L502.2,683.9 L512.2,680.4 L522.3,683.3 L532.4,676.8 L542.4,682.9 L552.5,681.3 L562.5,683.3 L572.6,683.7 L582.6,679.8 L592.7,678.6 L602.7,678.2 L612.8,683.9 L612.8,684.3 Z" fill="#f28e2b"/>
<line x1="10" x2="636.5" y1="444.5" y2="444.5" stroke="#cbcbcb" stroke-width="1"/>
<line x1="10" x2="636.5" y1="524.5" y2="524.5" stroke="#cbcbcb" stroke-width="1"/>
<line x1="10" x2="636.5" y1="604.5" y2="604.5" stroke="#cbcbcb" stroke-width="1"/>
<line x1="10" x2="636.5" y1="684.5" y2="684.5" stroke="#cbcbcb" stroke-width="1"/>
<line x1="117.5" x2="117.5" y1="444" y2="708" stroke="#cbcbcb" stroke-width="1"/>
<line x1="636" x2="636" y1="444" y2="708" stroke="#d9d9d9" stroke-width="1"/>
<line x1="140.4" x2="140.4" y1="685" y2="688" stroke="#dcdcdc" stroke-width="1"/>
<line x1="261.0" x2="261.0" y1="685" y2="688" stroke="#dcdcdc" stroke-width="1"/>
<line x1="381.6" x2="381.6" y1="685" y2="688" stroke="#dcdcdc" stroke-width="1"/>
<line x1="502.2" x2="502.2" y1="685" y2="688" stroke="#dcdcdc" stroke-width="1"/>
<line x1="622.8" x2="622.8" y1="685" y2="688" stroke="#dcdcdc" stroke-width="1"/></svg>
<svg class="abs" style="left:0;top:0" width="1280" height="720" viewBox="0 0 1280 720"><line x1="751" x2="1269.5" y1="494.0" y2="494.0" stroke="#f2f2f2" stroke-width="1"/>
<line x1="747" x2="750" y1="494.0" y2="494.0" stroke="#d0d0d0" stroke-width="1"/>
<line x1="751" x2="1269.5" y1="463.5" y2="463.5" stroke="#f2f2f2" stroke-width="1"/>
<line x1="747" x2="750" y1="463.5" y2="463.5" stroke="#d0d0d0" stroke-width="1"/>
<path d="M773.2,523.7 L773.2,514.5 L783.3,520.8 L793.3,501.5 L803.4,511.7 L813.4,513.5 L823.5,504.0 L833.6,507.0 L843.6,512.1 L853.7,487.3 L863.7,505.0 L873.8,490.8 L883.9,477.2 L893.9,506.0 L904.0,518.2 L914.0,505.0 L924.1,508.0 L934.2,509.7 L944.2,511.7 L954.3,503.0 L964.3,509.1 L974.4,483.7 L984.5,504.6 L994.5,477.0 L1004.6,488.3 L1014.6,512.1 L1024.7,517.8 L1034.8,504.6 L1044.8,504.0 L1054.9,500.9 L1064.9,504.0 L1075.0,504.0 L1085.1,505.0 L1095.1,482.3 L1105.2,505.0 L1115.2,475.5 L1125.3,468.0 L1135.4,515.2 L1145.4,513.7 L1155.5,507.0 L1165.5,510.5 L1175.6,498.5 L1185.7,494.8 L1195.7,505.4 L1205.8,500.5 L1215.8,480.0 L1225.9,489.8 L1236.0,467.0 L1246.0,476.2 L1246.0,523.7 Z" fill="#4e79a7"/>
<path d="M783.3,523.7 L783.3,523.7 L793.3,513.5 L803.4,521.7 L813.4,519.6 L823.5,518.8 L833.6,518.8 L843.6,521.7 L853.7,517.2 L863.7,518.6 L873.8,512.7 L883.9,516.6 L893.9,508.7 L904.0,523.3 L914.0,520.4 L924.1,517.2 L934.2,521.3 L944.2,519.8 L954.3,515.6 L964.3,518.2 L974.4,516.2 L984.5,515.2 L994.5,516.6 L1004.6,517.6 L1014.6,521.3 L1024.7,522.9 L1034.8,517.2 L1044.8,518.6 L1054.9,521.9 L1064.9,519.2 L1075.0,522.3 L1085.1,520.2 L1095.1,508.7 L1105.2,518.8 L1115.2,516.6 L1125.3,511.7 L1135.4,519.8 L1145.4,519.2 L1155.5,519.2 L1165.5,517.6 L1175.6,513.1 L1185.7,515.8 L1195.7,518.8 L1205.8,513.7 L1215.8,514.8 L1225.9,507.4 L1236.0,503.0 L1246.0,512.1 L1246.0,523.7 Z" fill="#f28e2b"/>
<line x1="751" x2="1269.5" y1="574.0" y2="574.0" stroke="#f2f2f2" stroke-width="1"/>
<line x1="747" x2="750" y1="574.0" y2="574.0" stroke="#d0d0d0" stroke-width="1"/>
<line x1="751" x2="1269.5" y1="543.5" y2="543.5" stroke="#f2f2f2" stroke-width="1"/>
<line x1="747" x2="750" y1="543.5" y2="543.5" stroke="#d0d0d0" stroke-width="1"/>
<path d="M773.2,604.3 L773.2,596.8 L783.3,602.7 L793.3,591.1 L803.4,587.0 L813.4,592.5 L823.5,584.2 L833.6,580.9 L843.6,586.0 L853.7,562.0 L863.7,592.1 L873.8,563.1 L883.9,576.3 L893.9,601.3 L904.0,596.2 L914.0,579.9 L924.1,585.0 L934.2,590.3 L944.2,588.0 L954.3,596.6 L964.3,586.0 L974.4,574.4 L984.5,590.1 L994.5,571.8 L1004.6,579.5 L1014.6,595.8 L1024.7,594.1 L1034.8,577.9 L1044.8,587.6 L1054.9,584.2 L1064.9,587.0 L1075.0,584.2 L1085.1,590.1 L1095.1,568.8 L1105.2,578.9 L1115.2,572.8 L1125.3,546.0 L1135.4,568.8 L1145.4,591.7 L1155.5,582.0 L1165.5,580.9 L1175.6,583.0 L1185.7,578.5 L1195.7,587.4 L1205.8,558.2 L1215.8,555.5 L1225.9,568.3 L1236.0,556.2 L1246.0,558.0 L1246.0,604.3 Z" fill="#4e79a7"/>
<path d="M783.3,604.3 L783.3,604.3 L793.3,602.3 L803.4,602.3 L813.4,602.9 L823.5,602.9 L833.6,598.8 L843.6,603.7 L853.7,599.2 L863.7,603.7 L873.8,596.8 L883.9,600.6 L893.9,604.3 L904.0,603.9 L914.0,603.7 L924.1,601.3 L934.2,603.7 L944.2,600.8 L954.3,603.3 L964.3,600.2 L974.4,597.6 L984.5,599.6 L994.5,600.0 L1004.6,599.8 L1014.6,603.7 L1024.7,603.9 L1034.8,596.6 L1044.8,597.6 L1054.9,601.9 L1064.9,603.3 L1075.0,601.9 L1085.1,602.3 L1095.1,598.8 L1105.2,603.7 L1115.2,602.9 L1125.3,600.8 L1135.4,601.7 L1145.4,603.3 L1155.5,601.9 L1165.5,601.9 L1175.6,602.3 L1185.7,602.3 L1195.7,602.3 L1205.8,598.2 L1215.8,592.7 L1225.9,599.2 L1236.0,595.2 L1246.0,596.8 L1246.0,604.3 Z" fill="#f28e2b"/>
<line x1="751" x2="1269.5" y1="654.0" y2="654.0" stroke="#f2f2f2" stroke-width="1"/>
<line x1="747" x2="750" y1="654.0" y2="654.0" stroke="#d0d0d0" stroke-width="1"/>
<line x1="751" x2="1269.5" y1="623.5" y2="623.5" stroke="#f2f2f2" stroke-width="1"/>
<line x1="747" x2="750" y1="623.5" y2="623.5" stroke="#d0d0d0" stroke-width="1"/>
<path d="M773.2,684.3 L773.2,679.2 L783.3,681.7 L793.3,634.5 L803.4,670.1 L813.4,669.7 L823.5,671.1 L833.6,671.7 L843.6,670.1 L853.7,637.6 L863.7,665.0 L873.8,638.0 L883.9,652.8 L893.9,676.8 L904.0,678.8 L914.0,668.0 L924.1,667.0 L934.2,666.4 L944.2,674.1 L954.3,667.6 L964.3,659.9 L974.4,654.8 L984.5,667.0 L994.5,647.7 L1004.6,630.1 L1014.6,675.2 L1024.7,665.4 L1034.8,651.2 L1044.8,660.5 L1054.9,640.0 L1064.9,658.9 L1075.0,663.6 L1085.1,669.1 L1095.1,648.3 L1105.2,636.2 L1115.2,642.7 L1125.3,650.2 L1135.4,658.9 L1145.4,674.1 L1155.5,632.9 L1165.5,665.0 L1175.6,663.0 L1185.7,657.9 L1195.7,648.8 L1205.8,656.5 L1215.8,643.1 L1225.9,633.1 L1236.0,608.1 L1246.0,649.8 L1246.0,684.3 Z" fill="#4e79a7"/>
<path d="M793.3,684.3 L793.3,652.4 L803.4,683.9 L813.4,683.3 L823.5,682.9 L833.6,683.7 L843.6,683.7 L853.7,656.9 L863.7,683.3 L873.8,676.2 L883.9,682.9 L893.9,680.8 L904.0,683.9 L914.0,683.9 L924.1,681.7 L934.2,683.7 L944.2,683.9 L954.3,683.7 L964.3,682.3 L974.4,681.9 L984.5,682.9 L994.5,681.3 L1004.6,676.2 L1014.6,683.9 L1014.6,684.3 ZM1034.8,684.3 L1034.8,679.8 L1044.8,682.7 L1054.9,682.9 L1064.9,683.3 L1075.0,682.9 L1085.1,682.3 L1095.1,680.6 L1105.2,682.9 L1115.2,675.2 L1125.3,679.2 L1135.4,682.7 L1145.4,683.3 L1155.5,681.3 L1165.5,678.2 L1175.6,683.9 L1185.7,682.9 L1195.7,679.2 L1205.8,682.7 L1215.8,677.2 L1225.9,681.9 L1236.0,664.0 L1246.0,682.3 L1246.0,684.3 Z" fill="#f28e2b"/>
<line x1="643" x2="1270.0" y1="444.5" y2="444.5" stroke="#cbcbcb" stroke-width="1"/>
<line x1="643" x2="1270.0" y1="524.5" y2="524.5" stroke="#cbcbcb" stroke-width="1"/>
<line x1="643" x2="1270.0" y1="604.5" y2="604.5" stroke="#cbcbcb" stroke-width="1"/>
<line x1="643" x2="1270.0" y1="684.5" y2="684.5" stroke="#cbcbcb" stroke-width="1"/>
<line x1="750.5" x2="750.5" y1="444" y2="708" stroke="#cbcbcb" stroke-width="1"/>
<line x1="1269.5" x2="1269.5" y1="444" y2="708" stroke="#d9d9d9" stroke-width="1"/>
<line x1="773.2" x2="773.2" y1="685" y2="688" stroke="#dcdcdc" stroke-width="1"/>
<line x1="893.9" x2="893.9" y1="685" y2="688" stroke="#dcdcdc" stroke-width="1"/>
<line x1="1014.6" x2="1014.6" y1="685" y2="688" stroke="#dcdcdc" stroke-width="1"/>
<line x1="1135.4" x2="1135.4" y1="685" y2="688" stroke="#dcdcdc" stroke-width="1"/>
<line x1="1256.1" x2="1256.1" y1="685" y2="688" stroke="#dcdcdc" stroke-width="1"/></svg>
<span class="x" style="left:45.6px;top:14.0px;font-size:10.2px;line-height:13px;color:#ffffff;font-weight:bold;transform:scaleX(0.902);">Explore</span>
<span class="x" style="left:85.0px;top:14.0px;font-size:10.2px;line-height:13px;color:#ffffff;transform:scaleX(1.055);">/</span>
<span class="x" style="left:95.1px;top:14.0px;font-size:10.2px;line-height:13px;color:#ffffff;font-weight:bold;transform:scaleX(0.946);">default</span>
<span class="x" style="left:132.6px;top:14.0px;font-size:10.2px;line-height:13px;color:#ffffff;transform:scaleX(1.055);">/</span>
<span class="x" style="left:142.8px;top:14.0px;font-size:10.2px;line-height:13px;color:#ffffff;font-weight:bold;transform:scaleX(0.914);">Executive Overview</span>
<span class="x" style="left:237.5px;top:14.0px;font-size:10.2px;line-height:13px;color:#ffffff;transform:scaleX(1.090);">/</span>
<span class="x" style="left:245.6px;top:14.0px;font-size:10.2px;line-height:13px;color:#ffffff;transform:scaleX(0.940);">Executive Overview</span>
<span class="x" style="left:872.7px;top:14.0px;font-size:10.2px;line-height:13px;color:#ffffff;transform:scaleX(0.942);">Device Layouts</span>
<span class="x" style="left:986.4px;top:14.0px;font-size:10.2px;line-height:13px;color:#ffffff;transform:scaleX(0.936);">Data Sources</span>
<span class="x" style="left:1160.7px;top:14.4px;font-size:10.5px;line-height:14px;color:#c4c5cf;">?</span>
<span class="x" style="left:1233.8px;top:14.8px;font-size:11px;line-height:14px;color:#41709f;transform:scaleX(1.059);">JP</span>
<span class="x" style="left:27.8px;top:46.8px;font-size:9px;line-height:12px;color:#b0b0b0;transform:scaleX(0.981);">Undo</span>
<span class="x" style="left:84.8px;top:46.8px;font-size:9px;line-height:12px;color:#b0b0b0;transform:scaleX(0.939);">Redo</span>
<span class="x" style="left:140.9px;top:46.8px;font-size:9px;line-height:12px;color:#b0b0b0;transform:scaleX(0.962);">Revert</span>
<span class="x" style="left:201.9px;top:46.8px;font-size:9px;line-height:12px;color:#3c3c3c;transform:scaleX(0.990);">Refresh</span>
<span class="x" style="left:268.8px;top:46.8px;font-size:9px;line-height:12px;color:#3c3c3c;transform:scaleX(0.960);">Pause</span>
<span class="x" style="left:665.8px;top:46.8px;font-size:9px;line-height:12px;color:#3c3c3c;">View: Original</span>
<span class="x" style="left:756.9px;top:46.8px;font-size:9px;line-height:12px;color:#3c3c3c;transform:scaleX(1.043);">Alerts</span>
<span class="x" style="left:816.5px;top:46.8px;font-size:9px;line-height:12px;color:#3c3c3c;transform:scaleX(1.055);">Metrics</span>
<span class="x" style="left:885.0px;top:46.8px;font-size:9px;line-height:12px;color:#3c3c3c;transform:scaleX(1.022);">Subscribe</span>
<span class="x" style="left:961.5px;top:46.8px;font-size:9px;line-height:12px;color:#3c3c3c;">Edit</span>
<span class="x" style="left:1012.4px;top:46.8px;font-size:9px;line-height:12px;color:#3c3c3c;transform:scaleX(0.982);">Share</span>
<span class="x" style="left:1071.3px;top:46.8px;font-size:9px;line-height:12px;color:#3c3c3c;transform:scaleX(1.007);">Download</span>
<span class="x" style="left:1146.8px;top:46.8px;font-size:9px;line-height:12px;color:#3c3c3c;transform:scaleX(1.039);">Comments</span>
<span class="x" style="left:1227.6px;top:46.8px;font-size:9px;line-height:12px;color:#3c3c3c;transform:scaleX(0.982);">Full Screen</span>
<span class="x" style="left:162.7px;top:109.6px;font-size:9.4px;line-height:12px;color:#2a2a2a;transform:scaleX(0.993);">Sales</span>
<span class="x" style="left:135.2px;top:125.6px;font-size:10px;line-height:13px;color:#666;transform:scaleX(1.015);">$2,297,201</span>
<span class="x" style="left:340.6px;top:109.6px;font-size:9.4px;line-height:12px;color:#2a2a2a;transform:scaleX(1.160);">Profit</span>
<span class="x" style="left:323.5px;top:125.6px;font-size:10px;line-height:13px;color:#666;transform:scaleX(1.019);">$286,397</span>
<span class="x" style="left:493.8px;top:109.6px;font-size:9.4px;line-height:12px;color:#2a2a2a;transform:scaleX(1.126);">Profit Ratio</span>
<span class="x" style="left:518.2px;top:125.6px;font-size:10px;line-height:13px;color:#666;transform:scaleX(0.980);">12.5%</span>
<span class="x" style="left:654.9px;top:109.6px;font-size:9.4px;line-height:12px;color:#2a2a2a;transform:scaleX(1.100);">Profit per Order</span>
<span class="x" style="left:694.7px;top:125.6px;font-size:10px;line-height:13px;color:#666;transform:scaleX(1.023);">$57.18</span>
<span class="x" style="left:819.3px;top:109.6px;font-size:9.4px;line-height:12px;color:#2a2a2a;transform:scaleX(1.046);">Sales per Customer</span>
<span class="x" style="left:860.5px;top:125.6px;font-size:10px;line-height:13px;color:#666;transform:scaleX(1.022);">$2,896.85</span>
<span class="x" style="left:1024.8px;top:109.6px;font-size:9.4px;line-height:12px;color:#2a2a2a;transform:scaleX(1.061);">Avg. Discount</span>
<span class="x" style="left:1052.0px;top:125.6px;font-size:10px;line-height:13px;color:#666;">15.62%</span>
<span class="x" style="left:1226.8px;top:109.6px;font-size:9.4px;line-height:12px;color:#2a2a2a;transform:scaleX(1.123);">Quantity</span>
<span class="x" style="left:1235.1px;top:125.6px;font-size:10px;line-height:13px;color:#666;transform:scaleX(1.010);">37,873</span>
<span class="x" style="left:1149.3px;top:147.7px;font-size:8.9px;line-height:12px;color:#3a3a3a;font-weight:bold;transform:scaleX(1.017);">Region</span>
<span class="x" style="left:1153.2px;top:165.1px;font-size:9px;line-height:12px;color:#666;transform:scaleX(1.056);">(All)</span>
<span class="x" style="left:1149.3px;top:192.6px;font-size:8.9px;line-height:12px;color:#3a3a3a;font-weight:bold;transform:scaleX(1.068);">Order Date</span>
<span class="x" style="left:1152.8px;top:209.9px;font-size:9px;line-height:12px;color:#5a5a5a;transform:scaleX(1.061);">1/3/2018</span>
<span class="x" style="left:1225.0px;top:209.9px;font-size:9px;line-height:12px;color:#5a5a5a;transform:scaleX(1.051);">1/10/2022</span>
<span class="x" style="left:1149.2px;top:248.9px;font-size:8.9px;line-height:12px;color:#3a3a3a;font-weight:bold;transform:scaleX(1.085);">Profit Ratio</span>
<span class="x" style="left:1152.7px;top:266.0px;font-size:9px;line-height:12px;color:#5a5a5a;transform:scaleX(0.992);">-21.7%</span>
<span class="x" style="left:1241.9px;top:266.0px;font-size:9px;line-height:12px;color:#5a5a5a;transform:scaleX(0.995);">37.0%</span>
<span class="x" style="left:1149.2px;top:305.0px;font-size:8.9px;line-height:12px;color:#3a3a3a;font-weight:bold;transform:scaleX(1.085);">Profit Ratio</span>
<span class="x" style="left:1152.2px;top:337.6px;font-size:9.2px;line-height:12px;color:#5a5a5a;transform:scaleX(1.078);">-50.0%</span>
<span class="x" style="left:1238.3px;top:337.6px;font-size:9.2px;line-height:12px;color:#5a5a5a;transform:scaleX(1.067);">50.0%</span>
<span class="x" style="left:14.8px;top:431.4px;font-size:9.5px;line-height:12px;color:#3f3f3f;font-weight:bold;transform:scaleX(0.992);">Segment</span>
<span class="x" style="left:14.8px;top:478.7px;font-size:9.6px;line-height:12px;color:#5e5e5e;transform:scaleX(0.994);">Consumer</span>
<span class="x" style="left:74.7px;top:445.9px;font-size:9.6px;line-height:12px;color:#5e5e5e;transform:scaleX(1.067);">$60,000</span>
<span class="x" style="left:74.7px;top:468.1px;font-size:9.6px;line-height:12px;color:#5e5e5e;transform:scaleX(1.067);">$40,000</span>
<span class="x" style="left:74.7px;top:493.8px;font-size:9.6px;line-height:12px;color:#5e5e5e;transform:scaleX(1.067);">$20,000</span>
<span class="x" style="left:100.7px;top:512.0px;font-size:9.6px;line-height:12px;color:#5e5e5e;transform:scaleX(1.031);">$0</span>
<span class="x" style="left:14.8px;top:558.7px;font-size:9.6px;line-height:12px;color:#5e5e5e;transform:scaleX(1.059);">Corporate</span>
<span class="x" style="left:74.7px;top:525.9px;font-size:9.6px;line-height:12px;color:#5e5e5e;transform:scaleX(1.067);">$60,000</span>
<span class="x" style="left:74.7px;top:548.1px;font-size:9.6px;line-height:12px;color:#5e5e5e;transform:scaleX(1.067);">$40,000</span>
<span class="x" style="left:74.7px;top:573.8px;font-size:9.6px;line-height:12px;color:#5e5e5e;transform:scaleX(1.067);">$20,000</span>
<span class="x" style="left:100.7px;top:592.0px;font-size:9.6px;line-height:12px;color:#5e5e5e;transform:scaleX(1.031);">$0</span>
<span class="x" style="left:14.8px;top:638.7px;font-size:9.6px;line-height:12px;color:#5e5e5e;transform:scaleX(1.027);">Home Office</span>
<span class="x" style="left:74.7px;top:605.9px;font-size:9.6px;line-height:12px;color:#5e5e5e;transform:scaleX(1.067);">$60,000</span>
<span class="x" style="left:74.7px;top:628.1px;font-size:9.6px;line-height:12px;color:#5e5e5e;transform:scaleX(1.067);">$40,000</span>
<span class="x" style="left:74.7px;top:653.8px;font-size:9.6px;line-height:12px;color:#5e5e5e;transform:scaleX(1.067);">$20,000</span>
<span class="x" style="left:100.7px;top:672.0px;font-size:9.6px;line-height:12px;color:#5e5e5e;transform:scaleX(1.031);">$0</span>
<span class="x" style="left:129.2px;top:691.8px;font-size:9.6px;line-height:12px;color:#5e5e5e;transform:scaleX(1.059);">2018</span>
<span class="x" style="left:249.8px;top:691.8px;font-size:9.6px;line-height:12px;color:#5e5e5e;transform:scaleX(1.059);">2019</span>
<span class="x" style="left:370.4px;top:691.8px;font-size:9.6px;line-height:12px;color:#5e5e5e;transform:scaleX(1.059);">2020</span>
<span class="x" style="left:491.0px;top:691.8px;font-size:9.6px;line-height:12px;color:#5e5e5e;transform:scaleX(1.059);">2021</span>
<span class="x" style="left:611.6px;top:691.8px;font-size:9.6px;line-height:12px;color:#5e5e5e;transform:scaleX(1.059);">2022</span>
<span class="x" style="left:647.8px;top:431.4px;font-size:9.5px;line-height:12px;color:#3f3f3f;font-weight:bold;">Category</span>
<span class="x" style="left:647.8px;top:478.7px;font-size:9.6px;line-height:12px;color:#5e5e5e;transform:scaleX(1.107);">Furniture</span>
<span class="x" style="left:707.7px;top:457.6px;font-size:9.6px;line-height:12px;color:#5e5e5e;transform:scaleX(1.067);">$40,000</span>
<span class="x" style="left:707.7px;top:488.7px;font-size:9.6px;line-height:12px;color:#5e5e5e;transform:scaleX(1.067);">$20,000</span>
<span class="x" style="left:733.7px;top:512.0px;font-size:9.6px;line-height:12px;color:#5e5e5e;transform:scaleX(1.031);">$0</span>
<span class="x" style="left:647.8px;top:551.7px;font-size:9.6px;line-height:12px;color:#5e5e5e;transform:scaleX(1.065);">Office</span>
<span class="x" style="left:647.8px;top:565.7px;font-size:9.6px;line-height:12px;color:#5e5e5e;transform:scaleX(1.046);">Supplies</span>
<span class="x" style="left:707.7px;top:537.6px;font-size:9.6px;line-height:12px;color:#5e5e5e;transform:scaleX(1.067);">$40,000</span>
<span class="x" style="left:707.7px;top:568.7px;font-size:9.6px;line-height:12px;color:#5e5e5e;transform:scaleX(1.067);">$20,000</span>
<span class="x" style="left:733.7px;top:592.0px;font-size:9.6px;line-height:12px;color:#5e5e5e;transform:scaleX(1.031);">$0</span>
<span class="x" style="left:647.8px;top:638.7px;font-size:9.6px;line-height:12px;color:#5e5e5e;transform:scaleX(1.034);">Technology</span>
<span class="x" style="left:707.7px;top:617.6px;font-size:9.6px;line-height:12px;color:#5e5e5e;transform:scaleX(1.067);">$40,000</span>
<span class="x" style="left:707.7px;top:648.7px;font-size:9.6px;line-height:12px;color:#5e5e5e;transform:scaleX(1.067);">$20,000</span>
<span class="x" style="left:733.7px;top:672.0px;font-size:9.6px;line-height:12px;color:#5e5e5e;transform:scaleX(1.031);">$0</span>
<span class="x" style="left:762.0px;top:691.8px;font-size:9.6px;line-height:12px;color:#5e5e5e;transform:scaleX(1.059);">2018</span>
<span class="x" style="left:882.7px;top:691.8px;font-size:9.6px;line-height:12px;color:#5e5e5e;transform:scaleX(1.059);">2019</span>
<span class="x" style="left:1003.4px;top:691.8px;font-size:9.6px;line-height:12px;color:#5e5e5e;transform:scaleX(1.059);">2020</span>
<span class="x" style="left:1124.2px;top:691.8px;font-size:9.6px;line-height:12px;color:#5e5e5e;transform:scaleX(1.059);">2021</span>
<span class="x" style="left:1244.9px;top:691.8px;font-size:9.6px;line-height:12px;color:#5e5e5e;transform:scaleX(1.059);">2022</span>
<span class="x" style="left:12.4px;top:77.5px;font-size:17.4px;line-height:23px;color:#3c3c3c;">Executive Overview - Profitability (All)</span>
<span class="x" style="left:12.7px;top:399.5px;font-size:17px;line-height:22px;color:#3c3c3c;transform:scaleX(0.986);">Monthly Sales by Segment - States: All</span>
<span class="x" style="left:646.3px;top:399.5px;font-size:17px;line-height:22px;color:#3c3c3c;transform:scaleX(0.988);">Monthly Sales by Category - States: All</span>
<span class="x" style="left:540.5px;top:231.8px;font-size:10.9px;line-height:14px;color:#5a83ad;transform:scaleX(0.943);">United</span>
<span class="x" style="left:541.1px;top:243.5px;font-size:10.9px;line-height:14px;color:#5a83ad;transform:scaleX(0.933);">States</span>
<span class="x" style="left:13.2px;top:374.8px;font-size:9.6px;line-height:12px;color:#4a4a4a;transform:scaleX(0.943);">© 2021 Mapbox</span>
<span class="x" style="left:82.3px;top:374.8px;font-size:9.6px;line-height:12px;color:#4a4a4a;transform:scaleX(0.964);">© OpenStreetMap</span>
</body>
</html>
